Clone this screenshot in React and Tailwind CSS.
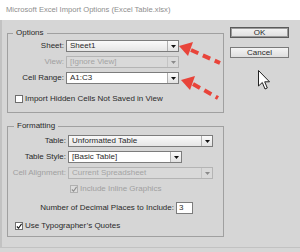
import React from 'react';

const Arrow = ({ disabled }) => (
    <svg width="5" height="3" viewBox="0 0 5 3">
        <polygon points="0,0 5,0 2.5,3" fill={disabled ? '#8a8a8a' : '#111'} />
    </svg>
);

const Select = ({ value, width, disabled, white }) => (
    <div
        className={`flex h-[12px] border ${disabled ? 'border-[#b4b4b4] bg-[#d9d9d9] text-[#a4a4a4]' : 'border-[#7c7c7c] text-[#2a2a2a]'} ${!disabled && white ? 'bg-white' : ''} ${!disabled && !white ? 'bg-gradient-to-b from-[#fafafa] to-[#e6e6e6]' : ''}`}
        style={{ width }}
    >
        <div className="flex-1 flex items-center pl-[3px] leading-none truncate">{value}</div>
        <div className={`w-[11px] flex items-center justify-center border-l ${disabled ? 'border-[#c4c4c4]' : 'border-[#b0b0b0] bg-gradient-to-b from-[#fbfbfb] to-[#e2e2e2]'}`}>
            <Arrow disabled={disabled} />
        </div>
    </div>
);

const Check = ({ checked, disabled }) => (
    <div className={`w-[8px] h-[8px] border flex items-center justify-center ${disabled ? 'border-[#b0b0b0] bg-[#dcdcdc]' : 'border-[#6e6e6e] bg-white'}`}>
        {checked && (
            <svg width="7" height="7" viewBox="0 0 7 7">
                <path d="M1 3.5 L3 5.5 L6.5 0.5" fill="none" stroke={disabled ? '#8c8c8c' : '#111'} strokeWidth="1.3" />
            </svg>
        )}
    </div>
);

const Row = ({ label, labelW, disabled, children }) => (
    <div className="flex items-center gap-[2px]">
        <span className={`text-right leading-none ${disabled ? 'text-[#a0a0a0]' : 'text-[#2a2a2a]'}`} style={{ width: labelW }}>{label}</span>
        {children}
    </div>
);

const Button = ({ children, primary }) => (
    <div className={`w-[59px] h-[11px] flex items-center justify-center leading-none text-[#2a2a2a] bg-gradient-to-b from-[#f4f4f4] to-[#dedede] border ${primary ? 'border-[#5a5a5a] shadow-[inset_0_0_0_1px_#9a9a9a]' : 'border-[#7a7a7a]'}`}>
        {children}
    </div>
);

export default function App() {
    return (
        <div className="relative w-[300px] h-[252px] overflow-hidden bg-[#d6d6d6] text-[8px] font-['Liberation_Sans',Arial,sans-serif]">
            {/* title */}
            <div className="h-[20px] bg-white flex items-center pl-[6px] text-[#8e8e8e] text-[7.6px] leading-none">
                Microsoft Excel Import Options (Excel Table.xlsx)
            </div>

            <div className="h-[228px] flex border-l-2 border-b border-[#c2c2c2]">
                {/* left groups */}
                <div className="pl-[5px] w-[222px]">
                    <fieldset className="mt-[8px] h-[85px] border border-[#a0a0a0]">
                        <legend className="ml-[5px] px-[3px] leading-[10px] text-[#2a2a2a]">Options</legend>
                        <div className="flex flex-col gap-[4px] pt-[2px]">
                            <Row label="Sheet:" labelW={56}><Select value="Sheet1" width={113} /></Row>
                            <Row label="View:" labelW={56} disabled><Select value="[Ignore View]" width={113} disabled /></Row>
                            <Row label="Cell Range:" labelW={56}><Select value="A1:C3" width={113} white /></Row>
                        </div>
                        <div className="flex items-center gap-[2px] ml-[7px] mt-[11px] text-[#2a2a2a] leading-none">
                            <Check />
                            <span>Import Hidden Cells Not Saved in View</span>
                        </div>
                    </fieldset>

                    <fieldset className="mt-[8px] h-[116px] border border-[#a0a0a0]">
                        <legend className="ml-[6px] px-[3px] leading-[10px] text-[#2a2a2a]">Formatting</legend>
                        <div className="flex flex-col gap-[4px] pt-[4px]">
                            <Row label="Table:" labelW={58}><Select value="Unformatted Table" width={145} /></Row>
                            <Row label="Table Style:" labelW={58}><Select value="[Basic Table]" width={114} white /></Row>
                            <Row label="Cell Alignment:" labelW={58} disabled><Select value="Current Spreadsheet" width={145} disabled /></Row>
                        </div>
                        <div className="flex items-center gap-[2px] ml-[62px] mt-[6px] text-[#a0a0a0] leading-none">
                            <Check checked disabled />
                            <span>Include Inline Graphics</span>
                        </div>
                        <div className="flex items-center justify-end gap-[2px] w-[185px] mt-[9px] text-[#2a2a2a] leading-none">
                            <span>Number of Decimal Places to Include:</span>
                            <div className="w-[17px] h-[12px] bg-white border border-[#7c7c7c] flex items-center pl-[2px]">3</div>
                        </div>
                        <div className="flex items-center gap-[2px] ml-[7px] mt-[8px] text-[#2a2a2a] leading-none">
                            <Check checked />
                            <span>Use Typographer’s Quotes</span>
                        </div>
                    </fieldset>
                </div>

                {/* buttons */}
                <div className="pl-[6px] pt-[7px] flex flex-col gap-[9px]">
                    <Button primary>OK</Button>
                    <Button>Cancel</Button>
                </div>
            </div>

            {/* red dashed arrows */}
            <svg className="absolute left-0 top-0 pointer-events-none" width="300" height="252">
                <polygon points="179,46 193,42 188,56" fill="#e8443a" />
                <line x1="191" y1="50" x2="220" y2="63" stroke="#e8443a" strokeWidth="4" strokeDasharray="8 5" />
                <polygon points="181,80 195,76 190,90" fill="#e8443a" />
                <line x1="193" y1="84" x2="218" y2="98" stroke="#e8443a" strokeWidth="4" strokeDasharray="8 5" />
            </svg>

            {/* mouse cursor */}
            <svg className="absolute left-[258px] top-[70px]" width="13" height="21" viewBox="0 0 13 21">
                <path d="M0.5 0.5 L0.5 16 L4.3 12.5 L7 19 L9.3 18 L6.7 11.8 L11.5 11.8 Z" fill="#fff" stroke="#222" strokeWidth="1" strokeLinejoin="round" />
            </svg>
        </div>
    );
}
